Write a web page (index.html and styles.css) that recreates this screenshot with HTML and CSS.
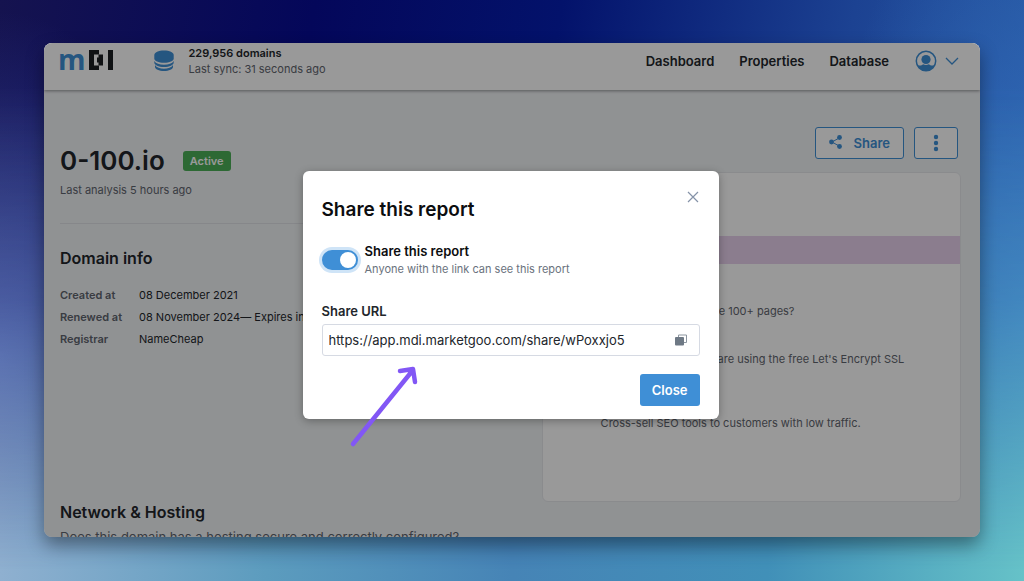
FILE: index.html
```html
<!DOCTYPE html>
<html lang="en">
<head>
<meta charset="utf-8">
<meta name="viewport" content="width=device-width, initial-scale=1">
<title>0-100.io – mDI</title>
<link rel="stylesheet" href="styles.css">
</head>
<body>
<div class="window">
  <header class="topbar">
    <a class="logo" href="#" aria-label="mDI home">
      <span class="logo-m">m</span>
      <svg class="logo-mark" viewBox="0 0 24 20" aria-hidden="true">
        <rect x="0" y="0" width="5" height="20"/>
        <rect x="0" y="0" width="10" height="4.500"/>
        <rect x="0" y="15.500" width="10" height="4.500"/>
        <rect x="9.500" y="4.500" width="4.500" height="11"/>
        <rect x="8" y="7.500" width="2" height="5"/>
        <rect x="19" y="0" width="5" height="20"/>
      </svg>
    </a>
    <svg class="db-icon" viewBox="0 0 20 22" aria-hidden="true">
      <path d="M.3 5C.3 2.300 4.500.5 10 .5S19.700 2.300 19.700 5v3.500c0 2.600-4.200 4.300-9.700 4.300S.3 11.100.3 8.500z"/>
      <path d="M.3 11c1.500 2.500 5.200 3.700 9.700 3.700s8.200-1.200 9.700-3.700v1.500c0 2.600-4.200 4.500-9.700 4.500S.3 15.100.3 12.500z"/>
      <path d="M1 15v2c0 2.200 4 4 9 4s9-1.800 9-4v-2c-1.500 2.500-5 3.800-9 3.800S2.500 17.500 1 15z"/>
    </svg>
    <div class="sync">
      <strong>229,956 domains</strong>
      <span>Last sync: 31 seconds ago</span>
    </div>
    <nav class="nav" aria-label="Main">
      <a href="#">Dashboard</a>
      <a href="#">Properties</a>
      <a href="#">Database</a>
    </nav>
    <button class="account" type="button" aria-label="Account menu">
      <svg class="avatar" viewBox="0 0 22 22" aria-hidden="true">
        <circle class="line" cx="11" cy="11" r="9.700"/>
        <circle cx="11" cy="9.500" r="4.600"/>
        <path d="M2.500 15.500h3.200c1.500-.2 2-1.300 2.500-1.300 1.800 1 3.800 1 5.600 0 .5 0 1 1.100 2.500 1.300h3.200C17.500 19 14.500 21 11 21s-6.500-2-8.500-5.500z"/>
      </svg>
      <svg class="chevron" viewBox="0 0 14 8" aria-hidden="true"><path d="M1 1l6 6 6-6"/></svg>
    </button>
  </header>

  <main class="content">
    <section class="details">
      <div class="title-row">
        <h1>0-100.io</h1>
        <span class="badge">Active</span>
      </div>
      <p class="analysis">Last analysis 5 hours ago</p>
      <hr class="rule">
      <h2>Domain info</h2>
      <dl class="facts">
        <dt>Created at</dt><dd>08 December 2021</dd>
        <dt>Renewed at</dt><dd>08 November 2024— Expires in</dd>
        <dt>Registrar</dt><dd>NameCheap</dd>
      </dl>
      <h2>Network &amp; Hosting</h2>
      <p class="lead">Does this domain has a hosting secure and correctly configured?</p>
    </section>
    <section class="side">
      <div class="actions">
        <button class="btn-outline" type="button">
          <svg class="share-icon" viewBox="0 0 14 16" aria-hidden="true">
            <path d="M11 2.500L3 7l8 4.500"/>
            <circle cx="10.500" cy="2.500" r="2.400"/><circle cx="2.500" cy="7" r="2.400"/><circle cx="10.500" cy="11.500" r="2.400"/>
          </svg>
          Share
        </button>
        <button class="btn-outline btn-more" type="button" aria-label="More actions">
          <svg class="dots" viewBox="0 0 6 18" aria-hidden="true"><circle cx="3" cy="3" r="2.200"/><circle cx="3" cy="9" r="2.200"/><circle cx="3" cy="15" r="2.200"/></svg>
        </button>
      </div>
      <div class="panel">
        <div class="band"></div>
        <ul class="tips">
          <li>Does your website have 100+ pages?</li>
          <li>Target customers that are using the free Let's Encrypt SSL</li>
          <li>Cross-sell SEO tools to customers with low traffic.</li>
        </ul>
      </div>
    </section>
  </main>

  <div class="overlay">
    <div class="modal" role="dialog" aria-modal="true" aria-labelledby="share-title">
      <button class="dismiss" type="button" aria-label="Dismiss">
        <svg viewBox="0 0 12 12" aria-hidden="true"><path d="M1 1l10 10M11 1L1 11"/></svg>
      </button>
      <h2 class="modal-title" id="share-title">Share this report</h2>
      <div class="switch-row">
        <input class="switch" type="checkbox" role="switch" id="share-toggle" checked>
        <label class="switch-label" for="share-toggle">
          <strong>Share this report</strong>
          <span>Anyone with the link can see this report</span>
        </label>
      </div>
      <label class="field-label" for="share-url">Share URL</label>
      <div class="field">
        <input class="url" type="text" id="share-url" value="https://app.mdi.marketgoo.com/share/wPoxxjo5" readonly>
        <button class="copy" type="button" aria-label="Copy link">
          <svg viewBox="0 0 12 12" aria-hidden="true"><path d="M3.500 3V1h8v7.500H9"/><rect x="0" y="3" width="9" height="8.500" rx="1"/></svg>
        </button>
      </div>
      <div class="modal-footer"><button class="btn-primary" type="button">Close</button></div>
      <svg class="arrow" viewBox="0 0 76 88" aria-hidden="true"><path d="M6 81L66 7M53 8L66 6L68 19"/></svg>
    </div>
  </div>
</div>
</body>
</html>
```
FILE: styles.css
```css
* { box-sizing: border-box; }

body {
  margin: 0;
  height: 100vh;
  padding: 43px 44px 44px;
  display: flex;
  font-family: Inter, "Liberation Sans", sans-serif;
  font-size: 11px;
  line-height: 16px;
  color: #22262b;
  background: linear-gradient(90deg, #8fb0d0 0%, #5c9cbe 26%, #4684b6 50%, #4190b8 75%, #66c2c8 100%);
}

body::before {
  content: "";
  position: absolute;
  inset: 0;
  background:
    radial-gradient(ellipse 20% 60% at 0 62%, rgba(58, 76, 170, .8), transparent),
    radial-gradient(ellipse 20% 80% at 100% 55%, rgba(52, 112, 190, .9), transparent),
    linear-gradient(100deg, #15134f 0%, #04075a 28%, #03126b 50%, #1c4292 76%, #2a5fa8 100%);
  -webkit-mask-image: linear-gradient(#000 15%, rgba(0, 0, 0, .7) 52%, transparent 98%);
  mask-image: linear-gradient(#000 15%, rgba(0, 0, 0, .7) 52%, transparent 98%);
}

button, input { font: inherit; margin: 0; }
button { padding: 0; border: 0; background: none; cursor: pointer; }
a { color: inherit; text-decoration: none; }
h1, h2, p, dl, dd, ul { margin: 0; padding: 0; }

.window {
  position: relative;
  flex: 1;
  min-width: 0;
  display: flex;
  flex-direction: column;
  overflow: hidden;
  border-radius: 8px;
  background: #f1f3f6;
  box-shadow: 0 8px 18px rgba(0, 0, 0, .4);
}

.topbar {
  display: flex;
  align-items: center;
  flex: none;
  height: 47px;
  padding: 0 21px 11px 14px;
  background: #fff;
  box-shadow: 0 1px 3px rgba(0, 0, 0, .4);
  z-index: 1;
}

.logo { display: flex; align-items: flex-start; gap: 3px; height: 28px; }
.logo-m { font: 700 28px/24px "Open Sans", sans-serif; color: #3f8fd6; }
.logo-mark { width: 24px; height: 20px; margin-top: 3px; fill: #1c1e22; }
.db-icon { width: 20px; height: 22px; margin: 0 15px 0 41px; fill: #3f8fd6; }
.sync { display: flex; flex-direction: column; }
.sync strong { font-weight: 600; }
.sync span { color: #5f656e; }

.nav { display: flex; gap: 25px; margin-left: auto; font-size: 13px; font-weight: 600; }
.account { display: flex; align-items: center; gap: 8px; margin-left: 26px; }
.avatar { width: 22px; height: 22px; fill: #3f8fd6; }
.avatar .line { fill: none; stroke: #3f8fd6; stroke-width: 1.5; }
.chevron { width: 14px; height: 8px; fill: none; stroke: #3f8fd6; stroke-width: 1.3; }

.content {
  flex: 1;
  min-height: 0;
  display: grid;
  grid-template-columns: minmax(0, 17fr) minmax(0, 16fr);
  gap: 36px;
  align-items: start;
  padding: 0 19px 0 16px;
}

.details { padding-top: 55px; }
.title-row { display: flex; align-items: center; gap: 18px; }
h1 { font-size: 26px; line-height: 32px; font-weight: 600; }
.badge { padding: 2px 7px; border-radius: 3px; background: #4caf57; color: #fff; font-weight: 600; }
.analysis { margin-top: 5px; color: #5f656e; }
.rule { margin: 25px 0 22px; border: 0; border-top: 1px solid #dfe2e6; }
h2 { font-size: 16px; line-height: 24px; font-weight: 600; }
.facts {
  display: grid;
  grid-template-columns: max-content 1fr;
  column-gap: 17px;
  margin: 14px 0 150px;
  line-height: 22px;
}
.facts dt { color: #5f656e; font-weight: 600; }
.lead { margin-top: 5px; font-size: 13px; color: #5f656e; white-space: nowrap; }

.side { padding-top: 37px; }
.actions { display: flex; justify-content: flex-end; gap: 10px; padding-right: 3px; }
.btn-outline {
  display: flex;
  align-items: center;
  gap: 11px;
  height: 32px;
  padding: 0 13px;
  border: 1px solid #3f8fd6;
  border-radius: 3px;
  background: #fff;
  color: #3f8fd6;
  font-size: 13px;
  font-weight: 600;
}
.btn-more { width: 44px; justify-content: center; }
.share-icon { width: 14px; height: 16px; fill: #3f8fd6; }
.share-icon path { fill: none; stroke: #3f8fd6; }
.dots { width: 6px; height: 18px; fill: #3f8fd6; }

.panel {
  margin-top: 13px;
  padding: 63px 0 70px;
  border: 1px solid #e6e8ec;
  border-radius: 6px;
  background: #fff;
}
.band { height: 28px; background: #e8d0ed; }
.tips {
  display: flex;
  flex-direction: column;
  gap: 32px;
  padding: 39px 40px 0 58px;
  list-style: none;
  color: #5f656e;
}
.tips li:last-child { padding-top: 16px; }

.overlay {
  position: absolute;
  inset: 0;
  z-index: 2;
  display: flex;
  justify-content: center;
  align-items: flex-start;
  padding: 128px 3px 0 0;
  background: rgba(0, 0, 0, .4);
}
.modal {
  position: relative;
  width: 416px;
  max-width: 100%;
  padding: 27px 19px 13px;
  border-radius: 6px;
  background: #fff;
  color: #0c0d0f;
  box-shadow: 0 2px 8px rgba(0, 0, 0, .3);
}
.dismiss { position: absolute; top: 16px; right: 16px; width: 20px; height: 20px; }
.dismiss svg { display: block; width: 12px; height: 12px; margin: auto; fill: none; stroke: #8592a8; stroke-width: 1.2; }
.modal-title { font-size: 19px; }
.switch-row { display: flex; align-items: center; gap: 7px; margin: 20px 0 24px; }
.switch {
  appearance: none;
  flex: none;
  width: 36px;
  height: 20px;
  padding: 2px;
  border-radius: 10px;
  background: #3f8fd6;
  box-shadow: 0 0 0 3px #cfe4f7;
}
.switch::before {
  content: "";
  display: block;
  width: 16px;
  height: 16px;
  margin-left: auto;
  border-radius: 50%;
  background: #fff;
}
.switch-label { display: flex; flex-direction: column; line-height: 18px; }
.switch-label strong { font-size: 13px; font-weight: 600; }
.switch-label span { color: #6a727d; }
.field-label { display: block; font-size: 13px; line-height: 18px; font-weight: 600; color: #22262b; }
.field {
  display: flex;
  align-items: center;
  height: 32px;
  margin-top: 4px;
  padding: 0 12px 0 6px;
  border: 1px solid #d6dae3;
  border-radius: 3px;
}
.url { flex: 1; min-width: 0; padding: 0; border: 0; outline: 0; background: none; font-size: 13px; color: #22262b; }
.copy svg { display: block; width: 12px; height: 12px; fill: #6e7985; }
.copy path { fill: none; stroke: #8d96a0; }
.modal-footer { display: flex; justify-content: flex-end; margin-top: 18px; }
.btn-primary {
  height: 32px;
  padding: 0 12px;
  border-radius: 3px;
  background: #3f8fd6;
  color: #fff;
  font-size: 13px;
  font-weight: 600;
}
.arrow { position: absolute; left: 44px; top: 192px; width: 76px; height: 88px; fill: none; stroke: #8257f5; stroke-width: 4.500; stroke-linecap: round; stroke-linejoin: round; pointer-events: none; }
```
